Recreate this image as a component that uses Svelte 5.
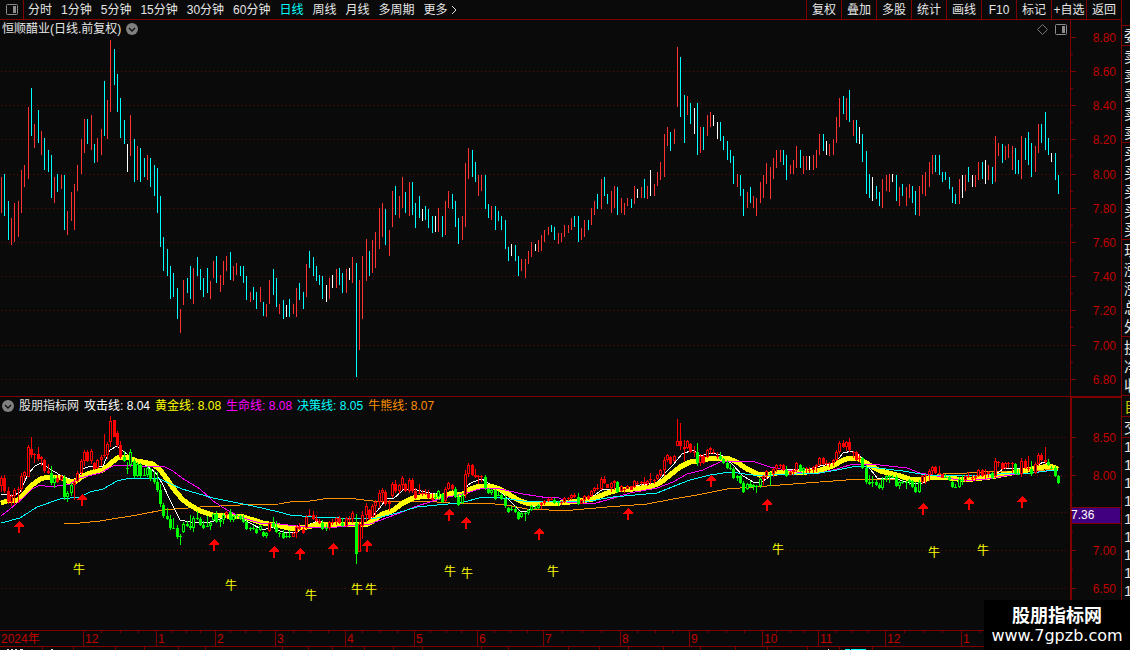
<script lang="ts">
  const periods = ['分时', '1分钟', '5分钟', '15分钟', '30分钟', '60分钟', '日线', '周线', '月线', '多周期', '更多'];
  const tools = ['复权', '叠加', '多股', '统计', '画线', 'F10', '标记', '+自选', '返回'];

  let period = $state('日线');

  // x, high, low, kind (r = up, c = down, w = flat)
  const barData = `
    1,177,213,r 4,174,216,c 8,201,240,c 11,218,245,r 14,203,242,r 18,201,237,r 21,170,213,r 24,165,187,r
    28,107,179,r 31,88,136,c 34,124,148,r 38,110,143,c 41,131,155,r 44,138,170,c 48,150,172,c 51,155,198,c
    54,177,203,r 57,174,192,c 61,175,189,r 64,175,230,c 67,211,235,r 71,192,221,r 74,184,230,r 77,165,191,r
    81,139,174,r 84,119,153,r 87,119,144,c 91,115,150,r 94,144,163,c 97,138,162,r 101,129,155,r 104,81,136,c
    107,100,139,r 110,40,112,r 114,49,85,c 117,74,112,c 120,98,138,c 124,120,144,c 127,144,172,w 130,115,156,r
    134,139,182,c 137,146,180,r 140,148,182,c 144,158,177,c 147,155,180,r 150,158,187,c 154,165,196,c 157,168,213,c
    160,196,247,c 163,237,271,c 167,249,276,c 170,266,299,c 173,273,297,c 177,288,319,c 180,309,333,r 183,280,305,r
    187,278,293,c 190,266,299,c 193,268,304,r 197,257,276,c 200,269,290,c 203,278,297,c 207,268,293,c 210,281,299,r
    213,261,278,r 216,256,283,c 220,275,292,r 223,261,285,r 226,256,271,r 230,252,280,c 233,266,281,r 236,263,275,r
    240,266,276,c 243,266,283,c 246,276,300,c 250,292,302,r 253,287,300,c 256,292,309,c 260,287,302,r 263,302,316,c
    266,304,317,r 269,280,304,r 273,269,295,c 276,278,307,c 279,304,314,r 283,300,319,c 286,305,317,w 289,299,317,c
    293,304,314,r 296,288,317,r 299,283,300,c 303,292,309,c 306,264,297,r 309,251,268,c 313,257,276,c 316,266,281,c
    319,275,285,c 322,276,299,c 326,285,302,w 329,278,299,r 332,275,288,w 336,269,288,r 339,268,285,c 342,273,293,c
    346,269,293,r 349,268,280,w 352,257,283,r 356,263,377,c 359,280,350,r 362,256,319,r 366,239,281,r 369,251,276,c
    372,240,273,r 375,232,268,r 379,208,249,r 382,203,237,r 385,209,245,c 389,230,256,r 392,191,227,r 395,186,215,c
    399,196,218,r 402,177,208,r 405,192,213,c 409,182,216,r 412,182,215,c 415,203,228,c 419,196,218,c 422,209,221,w
    425,206,220,c 428,209,228,c 432,216,233,c 435,216,232,w 438,208,232,r 442,216,237,c 445,201,235,r 448,191,208,r
    452,194,209,c 455,201,227,c 458,218,244,c 462,216,240,r 465,163,227,r 468,148,179,r 472,150,177,c 475,162,182,c
    478,175,196,r 481,175,191,r 485,175,209,c 488,204,218,c 491,206,220,r 495,206,230,c 498,211,221,c 501,216,230,c
    505,220,249,c 508,247,261,c 511,244,256,w 515,245,261,c 518,256,276,c 521,259,271,r 525,259,278,r 528,251,264,r
    531,242,257,r 535,244,251,w 538,240,252,r 541,235,251,r 544,230,242,r 548,227,235,r 551,225,232,c 554,227,240,c
    558,233,244,r 561,233,242,r 564,225,237,r 568,225,233,r 571,218,230,r 574,216,227,c 578,216,242,c 581,228,240,r
    584,220,237,r 588,220,230,c 591,208,225,r 594,201,215,r 597,194,209,c 601,179,209,r 604,177,196,c 607,194,204,c
    611,191,213,r 614,186,208,r 617,187,215,c 621,198,213,r 624,203,215,r 627,198,206,r 631,199,208,c 634,186,204,r
    637,189,198,w 641,187,198,r 644,179,198,c 647,186,199,r 650,170,196,w 654,184,196,r 657,172,186,r 660,162,180,r
    664,134,177,r 667,127,146,r 670,132,151,c 674,129,144,r 677,47,107,r 680,57,117,c 684,95,143,c 687,96,115,r
    690,103,124,c 694,108,134,w 697,103,155,c 700,127,153,r 703,127,150,c 707,115,136,r 710,112,127,r 713,115,126,w
    717,122,139,w 720,122,141,c 723,136,150,c 727,141,160,c 730,150,163,c 733,156,184,c 737,174,187,r 740,175,196,c
    743,189,216,c 747,192,208,r 750,187,203,c 753,196,208,r 756,198,216,r 760,182,203,r 763,175,198,r 766,163,184,r
    770,167,199,r 773,158,179,r 776,150,168,r 780,150,162,r 783,150,165,c 786,155,180,c 790,165,174,r 793,160,174,r
    796,146,168,r 800,150,168,c 803,156,174,r 806,156,170,r 809,156,170,w 813,155,170,r 816,150,168,r 819,134,155,r
    823,134,151,c 826,141,155,w 829,144,156,r 833,139,155,r 836,117,143,r 839,98,127,r 843,96,114,c 846,98,120,r
    849,90,122,c 853,120,136,r 856,120,143,c 859,127,144,w 862,134,162,c 866,151,194,c 869,174,198,c 872,177,201,w
    876,186,199,c 879,192,206,c 882,179,208,r 886,175,191,r 889,174,192,r 892,174,182,w 896,175,201,c 899,187,206,r
    902,184,196,c 906,187,206,r 909,184,198,r 912,186,203,c 915,191,215,c 919,186,216,r 922,175,194,r 925,172,196,r
    929,162,187,r 932,155,174,r 935,155,172,c 939,155,175,c 942,172,182,c 945,172,180,c 949,177,189,c 952,187,203,c
    955,194,204,c 959,179,204,r 962,175,198,w 965,175,191,r 968,167,182,c 972,175,187,w 975,175,187,r 978,162,180,r
    982,162,179,c 985,160,184,w 988,165,180,r 992,167,184,c 995,136,182,r 998,143,156,r 1002,144,163,c 1005,146,160,r
    1008,144,158,r 1012,146,170,r 1015,148,174,c 1018,160,174,c 1021,136,179,r 1025,138,160,c 1028,132,165,c
    1031,143,177,c 1035,146,172,r 1038,124,153,r 1041,124,143,c 1045,112,150,c 1048,138,155,c 1051,153,162,w
    1055,153,180,c 1058,175,194,c`;

  const bars = barData.trim().split(/\s+/).map((s) => {
    const [x, high, low, kind] = s.split(',');
    return { x: +x, high: +high, low: +low, kind };
  });

  // stretches where the lower pane paints candles green
  const greenRanges = [
    [50, 55], [64, 72], [124, 224], [229, 267], [272, 292], [321, 327], [341, 343], [355, 357],
    [433, 443], [454, 464], [484, 539], [553, 559], [577, 579], [616, 618], [696, 698], [719, 761],
    [769, 771], [785, 787], [799, 804], [861, 920], [944, 963], [991, 993], [1014, 1019], [1030, 1032], [1047, 1060]
  ];

  // bodies that do not follow from the previous close
  const bodies: Record<number, number[]> = {
    28: [447, 477], 110: [421, 442], 114: [420, 437], 356: [523, 554], 359: [524, 552],
    677: [441, 446], 680: [441, 446], 684: [447, 449]
  };

  const isGreen = (x: number) => greenRanges.some(([a, b]) => x >= a && x <= b);
  const toLower = (y: number) => 475 + (y - 174.5) * 0.4415;

  let lastClose = toLower(200);
  const candles = bars.map((b) => {
    const high = Math.round(toLower(b.high));
    const low = Math.round(toLower(b.low));
    const range = low - high;
    const close = b.kind === 'c' ? low - range * 0.12 : b.kind === 'r' ? high + range * 0.14 : high + range * 0.5;
    const open = b.kind === 'w' ? close : Math.min(low - range * 0.1, Math.max(high + range * 0.1, lastClose));
    lastClose = close;
    const [top, bottom] = bodies[b.x] ?? [Math.round(Math.min(open, close)), Math.round(Math.max(open, close))];
    return { x: b.x, high, low, top, height: Math.max(1, bottom - top), hollow: b.kind === 'r' && bottom - top > 2, green: isGreen(b.x) };
  });

  const lines = [
    { name: 'bull', points: '64,524 80,523 100,521 137,515 163,510 200,507 240,505 279,504 290,502 310,501 330,498 347,498 373,501 423,501 450,503 483,503 507,505 527,509 549,510 573,510 607,507 647,504 673,499 697,495 727,489 767,486 793,484 833,481 860,479 900,479 925,477 943,474 967,473 1000,471 1033,471 1058,469' },
    { name: 'attack', points: '1,494 13,496 20,492 28,474 35,466 41,463 50,469 60,475 72,480 78,477 83,469 90,466 103,466 110,450 117,446 123,451 133,459 147,466 155,472 162,483 170,500 180,520 190,522 207,523 220,519 230,514 240,517 250,523 263,530 272,527 277,530 287,533 297,532 310,524 318,521 330,524 350,522 365,524 373,516 382,505 387,498 393,499 403,490 408,489 417,490 430,493 443,495 455,492 463,495 468,485 473,482 482,479 488,483 503,494 512,503 520,511 527,512 532,507 545,503 580,502 592,497 603,489 620,489 640,485 657,483 665,473 673,465 682,454 693,450 700,456 713,453 723,456 733,465 743,476 755,483 763,481 772,475 783,469 807,470 820,466 835,463 843,453 852,451 860,456 867,465 878,479 893,478 910,483 923,483 932,478 943,476 953,480 967,481 980,478 993,476 1003,469 1017,468 1030,471 1043,462 1053,467 1058,470' },
    { name: 'gold', points: '1,503 7,501 18,500 24,494 31,486 40,479 48,477 60,477 67,481 75,482 83,476 93,472 103,470 110,464 117,458 127,457 137,461 153,464 160,470 167,479 173,488 182,499 190,505 200,511 213,515 227,516 240,516 250,519 263,523 280,526 293,529 307,527 320,524 337,524 367,524 373,521 382,514 392,511 403,503 413,498 427,496 443,496 452,493 457,495 463,494 470,489 480,486 490,486 500,489 510,495 520,501 530,504 549,503 560,503 580,501 593,499 607,493 618,490 633,489 650,487 660,483 670,475 680,467 690,462 703,460 713,458 727,458 737,462 747,469 760,475 770,474 783,472 807,472 820,470 833,466 843,460 850,458 859,459 868,464 880,471 897,475 910,479 923,480 933,477 943,477 957,479 973,479 990,477 1007,474 1023,471 1037,468 1050,466 1058,469' },
    { name: 'life', points: '1,516 10,509 23,498 32,489 40,485 50,487 70,484 80,478 100,473 115,465 133,466 163,466 173,471 182,478 200,489 213,501 227,510 240,517 260,523 279,524 307,527 337,527 370,524 397,514 417,506 443,498 463,494 483,488 500,489 523,494 549,498 557,497 567,502 592,504 607,500 630,493 657,488 673,482 687,474 703,470 720,462 733,461 752,461 770,467 787,470 807,474 820,473 837,469 853,464 880,465 907,468 920,473 943,477 963,481 987,479 1010,475 1030,473 1047,471 1058,470' },
    { name: 'decide', points: '1,523 20,518 37,507 60,499 80,497 90,492 103,489 117,481 130,478 160,479 182,489 213,498 233,502 253,506 279,512 290,515 313,517 340,518 373,519 397,513 417,507 437,505 460,503 483,497 503,498 523,501 549,502 590,501 613,497 657,493 677,485 690,480 710,475 730,472 753,475 773,475 819,473 837,470 857,466 877,468 903,471 927,475 967,476 1000,474 1033,473 1052,470 1058,470' }
  ];

  const arrows = [
    [19, 521], [82, 494], [214, 539], [274, 546], [300, 548], [333, 543], [367, 540], [449, 509], [466, 517],
    [539, 528], [628, 508], [711, 475], [767, 499], [923, 503], [969, 498], [1022, 496]
  ];
  const bulls = [
    [79, 569], [231, 585], [311, 595], [357, 589], [371, 589], [450, 571], [467, 573], [553, 571],
    [778, 549], [934, 552], [983, 550]
  ];

  const priceRows = [37, 71, 105, 139, 174, 208, 242, 276, 310, 345, 379].map((y, i) => ({
    y,
    label: (8.8 - i * 0.2).toFixed(2)
  }));
  const lowerRows = [
    { y: 437, label: '8.50' }, { y: 475, label: '8.00' }, { y: 512, label: '' }, { y: 550, label: '7.00' }, { y: 588, label: '6.50' }
  ];

  const months = [
    [83, '12'], [156, '1'], [215, '2'], [275, '3'], [345, '4'], [414, '5'], [477, '6'], [543, '7'],
    [620, '8'], [689, '9'], [762, '10'], [818, '11'], [885, '12'], [961, '1'], [1032, '']
  ] as [number, string][];
  const stripTicks = [42, 73, 115, 144, 178, 205, 282, 308, 332, 364, 393, 422, 481, 508, 568, 599, 628, 663, 700, 735, 767, 807, 839, 872];

  const legend = [
    { name: 'attack', label: '攻击线: 8.04' },
    { name: 'gold', label: '黄金线: 8.08' },
    { name: 'life', label: '生命线: 8.08' },
    { name: 'decide', label: '决策线: 8.05' },
    { name: 'bull', label: '牛熊线: 8.07' }
  ];

  const quoteGroups = [['委'], ['卖', '卖', '卖', '卖', '卖'], ['买', '买', '买', '买', '买'], ['现', '涨', '涨', '总', '外'], ['换', '净', '收']];
</script>

<div class="page">
  <main>
    <header>
      <button class="layout" aria-label="布局">
        {@render panelIcon()}
      </button>
      <nav class="periods">
        {#each periods as p}
          <button class:active={p === period} onclick={() => (period = p)}>
            {p}{#if p === '更多'}<svg width="7" height="10" viewBox="0 0 7 10"><path d="M1 1l4 4-4 4" fill="none" stroke="#e0e0e0" /></svg>{/if}
          </button>
        {/each}
      </nav>
      <nav class="tools">
        {#each tools as tool}
          <button>{tool}</button>
        {/each}
      </nav>
    </header>

    <section class="pane">
      <div class="title">
        <span>恒顺醋业(日线.前复权)</span>
        {@render chevron()}
      </div>
      <div class="marks">
        <svg width="11" height="11" viewBox="0 0 11 11"><path d="M5.5 0.5l5 5-5 5-5-5z" fill="none" stroke="#777" /></svg>
        {@render panelIcon()}
      </div>
      <svg class="chart" viewBox="0 20 1121 377">
        {#each priceRows as row, i}
          {#if i > 0}
            <path class="grid" d="M1 {row.y + 0.5}H1067" />
          {/if}
          <rect class="rule" x="1071" y={row.y} width="5" height="1" />
          {#if i < 10}
            <rect class="rule" x="1071" y={row.y + 17} width="2" height="1" />
          {/if}
          <text class="price" x="1116" y={row.y + 5}>{row.label}</text>
        {/each}
        {#each bars as bar}
          <rect class="bar {bar.kind}" x={bar.x} y={bar.high} width="1" height={bar.low - bar.high} />
        {/each}
        <rect class="rule" x="1070" y="20" width="1" height="377" />
        <rect class="rule" x="0" y="396" width="1121" height="1" />
      </svg>
    </section>

    <section class="pane">
      <div class="title">
        {@render chevron()}
        <span>股朋指标网</span>
        {#each legend as item}
          <span class={item.name}>{item.label}</span>
        {/each}
      </div>
      <svg class="chart" viewBox="0 397 1121 233">
        {#each lowerRows as row, i}
          <path class="grid" d="M1 {row.y + 0.5}H1067" />
          <rect class="rule" x="1071" y={row.y} width="5" height="1" />
          {#if i < 4}
            <rect class="rule" x="1071" y={row.y + 19} width="2" height="1" />
          {/if}
          {#if row.label}
            <text class="price" x="1116" y={row.y + 5}>{row.label}</text>
          {/if}
        {/each}
        {#each lines as line}
          <polyline class="line {line.name}" points={line.points} />
        {/each}
        {#each candles as c}
          <g class="candle" class:green={c.green}>
            <rect x={c.x} y={c.high} width="1" height={c.low - c.high} />
            <rect x={c.x - 1} y={c.top} width="3" height={c.height} />
            {#if c.hollow}
              <rect class="core" x={c.x} y={c.top + 1} width="1" height={c.height - 2} />
            {/if}
          </g>
        {/each}
        {#each arrows as [x, y]}
          <path class="arrow" d="M{x} {y}l5 5v1h-4v6h-2v-6h-4v-1z" />
        {/each}
        {#each bulls as [x, y]}
          <text class="bull-mark" {x} y={y + 5}>牛</text>
        {/each}
        <rect class="rule" x="1070" y="397" width="2" height="233" />
        <rect class="rule" x="1070" y="397" width="51" height="1" />
        <rect class="value" x="1072" y="507" width="48" height="17" />
        <path class="value-edge" d="M1072 507.5h49M1072 523.5h49" />
        <text class="value-text" x="1071" y="519">7.36</text>
      </svg>
    </section>

    <svg class="chart" viewBox="0 630 1121 20">
      <rect class="rule" x="0" y="630" width="1121" height="1" />
      <rect class="rule" x="0" y="646" width="1121" height="1" />
      <text class="month" x="1" y="643">2024年</text>
      {#each months as [x, label], i}
        <rect class="rule" {x} y="630" width="1" height="16" />
        {#if label}
          <text class="month" x={x + 2} y="643">{label}</text>
        {/if}
        {#if i < months.length - 1}
          {#each [0.25, 0.5, 0.75] as part}
            <rect class="rule" x={Math.round(x + (months[i + 1][0] - x) * part)} y="631" width="1" height="2" />
          {/each}
        {/if}
      {/each}
      {#each stripTicks as x}
        <rect class="rule" {x} y="647" width="1" height="3" />
      {/each}
      <path d="M7 649.5h2m2 0h2m2 0h2m3 0h3m28 0h2M828 649.5h1" stroke="#ddd" />
      <path d="M845 649.5h5m1 0h15" stroke="#0ff" />
    </svg>
  </main>

  <aside>
    {#each quoteGroups as group}
      <div class="group">
        {#each group as cell}
          <span>{cell}</span>
        {/each}
      </div>
    {/each}
    <div class="group own"><span>自</span></div>
    <div class="group"><span>交</span></div>
    <div class="group ticks">
      {#each Array(9) as _}
        <span>1</span>
      {/each}
    </div>
  </aside>

  <div class="watermark">
    <strong>股朋指标网</strong>
    <span>www.7gpzb.com</span>
  </div>
</div>

{#snippet chevron()}
  <svg class="chevron" width="12" height="12" viewBox="0 0 12 12">
    <circle cx="6" cy="6" r="6" fill="#808080" />
    <path d="M3 5l3 3 3-3" fill="none" stroke="#111" stroke-width="1.4" />
  </svg>
{/snippet}

{#snippet panelIcon()}
  <svg width="12" height="11" viewBox="0 0 12 11">
    <rect x="0.5" y="0.5" width="11" height="10" rx="1" fill="none" stroke="#8c8c8c" />
    <rect x="7" y="2" width="3" height="7" fill="#8c8c8c" />
  </svg>
{/snippet}

<style>
  :global(body) {
    background: #0a0a0a;
  }

  .page {
    position: relative;
    display: flex;
    overflow: hidden;
    background: #0a0a0a;
    color: #e6e6e6;
    font: 12px/18px "Liberation Sans", "Noto Sans CJK SC", sans-serif;
  }

  main {
    flex: 1;
    min-width: 0;
  }

  header {
    display: flex;
    height: 19px;
    border-bottom: 1px solid #800000;
  }

  button {
    padding: 0;
    border: 0;
    background: none;
    color: inherit;
    font: inherit;
    white-space: nowrap;
    cursor: pointer;
  }

  .layout {
    display: flex;
    align-items: center;
    justify-content: center;
    width: 24px;
    border-right: 1px solid #800000;
    box-sizing: border-box;
  }

  .periods {
    display: flex;
    flex: 1;
    gap: 9px;
    padding-left: 4px;
  }

  .periods svg {
    margin-left: 3px;
    vertical-align: -1px;
  }

  .active {
    color: #00ffff;
  }

  .tools {
    display: flex;
  }

  .tools button {
    width: 35px;
    border-left: 1px solid #800000;
    box-sizing: border-box;
  }

  .pane {
    position: relative;
  }

  .title {
    position: absolute;
    top: 0;
    left: 2px;
    display: flex;
    align-items: center;
    gap: 5px;
  }

  .marks {
    position: absolute;
    top: 4px;
    right: 54px;
    display: flex;
    gap: 7px;
  }

  .chart {
    display: block;
    width: 100%;
    height: auto;
    shape-rendering: crispEdges;
  }

  .chevron {
    display: block;
  }

  span.attack { color: #fff; }
  span.gold { color: #ff0; }
  span.life { color: #f0f; }
  span.decide { color: #0ff; }
  span.bull { color: #ff9000; }

  .grid {
    stroke: #640808;
    stroke-dasharray: 1 3;
  }

  .rule {
    fill: #800000;
  }

  .price,
  .month {
    fill: #c00000;
  }

  .price {
    text-anchor: end;
  }

  .r { fill: #ff3232; }
  .c { fill: #00ffff; }
  .w { fill: #fff; }

  .line {
    fill: none;
    stroke-width: 1;
  }

  .line.attack { stroke: #fff; }
  .line.gold { stroke: #ff0; stroke-width: 5; }
  .line.life { stroke: #f0f; }
  .line.decide { stroke: #0ff; }
  .line.bull { stroke: #ff9000; }

  .candle { fill: #f00; }
  .candle.green { fill: #0f0; }
  .candle .core { fill: #0a0a0a; }

  .arrow {
    fill: #f00;
  }

  .bull-mark {
    fill: #ff0;
    text-anchor: middle;
  }

  .value {
    fill: #400080;
  }

  .value-edge {
    stroke: #800000;
  }

  .value-text {
    fill: #fff;
  }

  aside {
    width: 8px;
    padding-top: 25px;
    border-left: 1px solid #800000;
    overflow: hidden;
  }

  .group {
    display: flex;
    flex-direction: column;
    padding: 1px 0 0 2px;
    border-top: 1px solid #800000;
    font-size: 15px;
    line-height: 19px;
  }

  .group:first-child {
    padding-top: 0;
  }

  .own {
    color: #c8c800;
  }

  .group.ticks {
    padding-top: 0;
    line-height: 18px;
  }

  .watermark {
    position: absolute;
    right: 0;
    bottom: 0;
    display: flex;
    flex-direction: column;
    align-items: center;
    width: 146px;
    height: 50px;
    padding-top: 2px;
    box-sizing: border-box;
    background: #000;
    color: #fff;
    font: 16px/20px "DejaVu Sans", sans-serif;
  }

  .watermark strong {
    font: bold 18px/24px "Noto Sans CJK SC", sans-serif;
  }
</style>
